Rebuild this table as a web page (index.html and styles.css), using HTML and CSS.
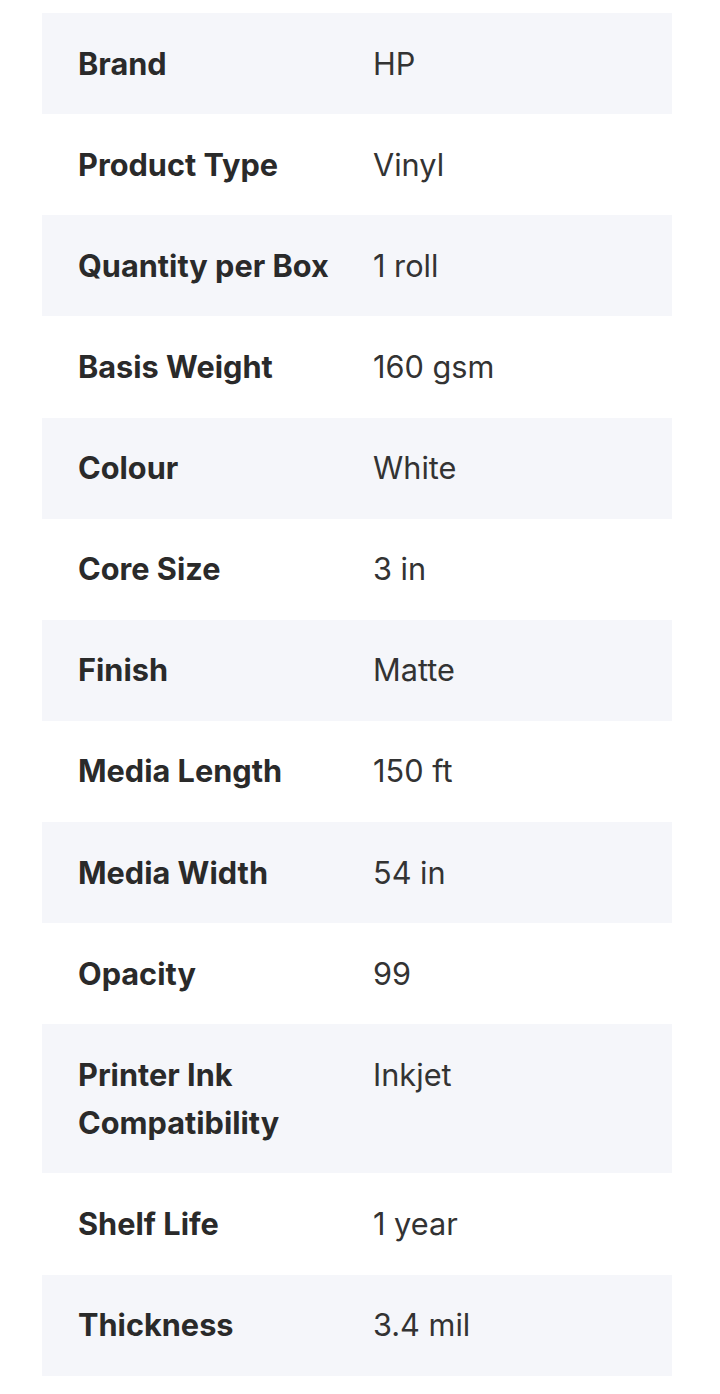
FILE: index.html
```html
<!DOCTYPE html>
<html>
<head>
<meta charset="utf-8">
<link rel="stylesheet" href="styles.css">
</head>
<body>
<div class="specs">
  <div class="row"><div class="label">Brand</div><div class="value">HP</div></div>
  <div class="row"><div class="label">Product Type</div><div class="value">Vinyl</div></div>
  <div class="row"><div class="label">Quantity per Box</div><div class="value">1 roll</div></div>
  <div class="row"><div class="label">Basis Weight</div><div class="value">160 gsm</div></div>
  <div class="row"><div class="label">Colour</div><div class="value">White</div></div>
  <div class="row"><div class="label">Core Size</div><div class="value">3 in</div></div>
  <div class="row"><div class="label">Finish</div><div class="value">Matte</div></div>
  <div class="row"><div class="label">Media Length</div><div class="value">150 ft</div></div>
  <div class="row"><div class="label">Media Width</div><div class="value">54 in</div></div>
  <div class="row"><div class="label">Opacity</div><div class="value">99</div></div>
  <div class="row"><div class="label">Printer Ink Compatibility</div><div class="value">Inkjet</div></div>
  <div class="row"><div class="label">Shelf Life</div><div class="value">1 year</div></div>
  <div class="row"><div class="label">Thickness</div><div class="value">3.4 mil</div></div>
</div>
</body>
</html>
```

FILE: styles.css
```css
html, body {
  margin: 0;
  padding: 0;
  background: #ffffff;
}

body {
  padding: 13px 48px 0 42px;
  font-family: Inter, "Noto Sans", sans-serif;
  color: #2b2b2b;
}

.specs {
  width: 630px;
  display: flex;
  flex-direction: column;
}

.row {
  display: grid;
  grid-template-columns: 331px 1fr;
  font-size: 30.7px;
  line-height: 48px;
}

.row:nth-child(odd) {
  background: #f5f6fa;
}

.label {
  padding: 26.57px 36px;
  font-weight: 700;
  color: #2a2a2a;
}

.value {
  padding: 26.57px 0 26.57px 0;
  font-weight: 400;
  color: #333333;
}
```
